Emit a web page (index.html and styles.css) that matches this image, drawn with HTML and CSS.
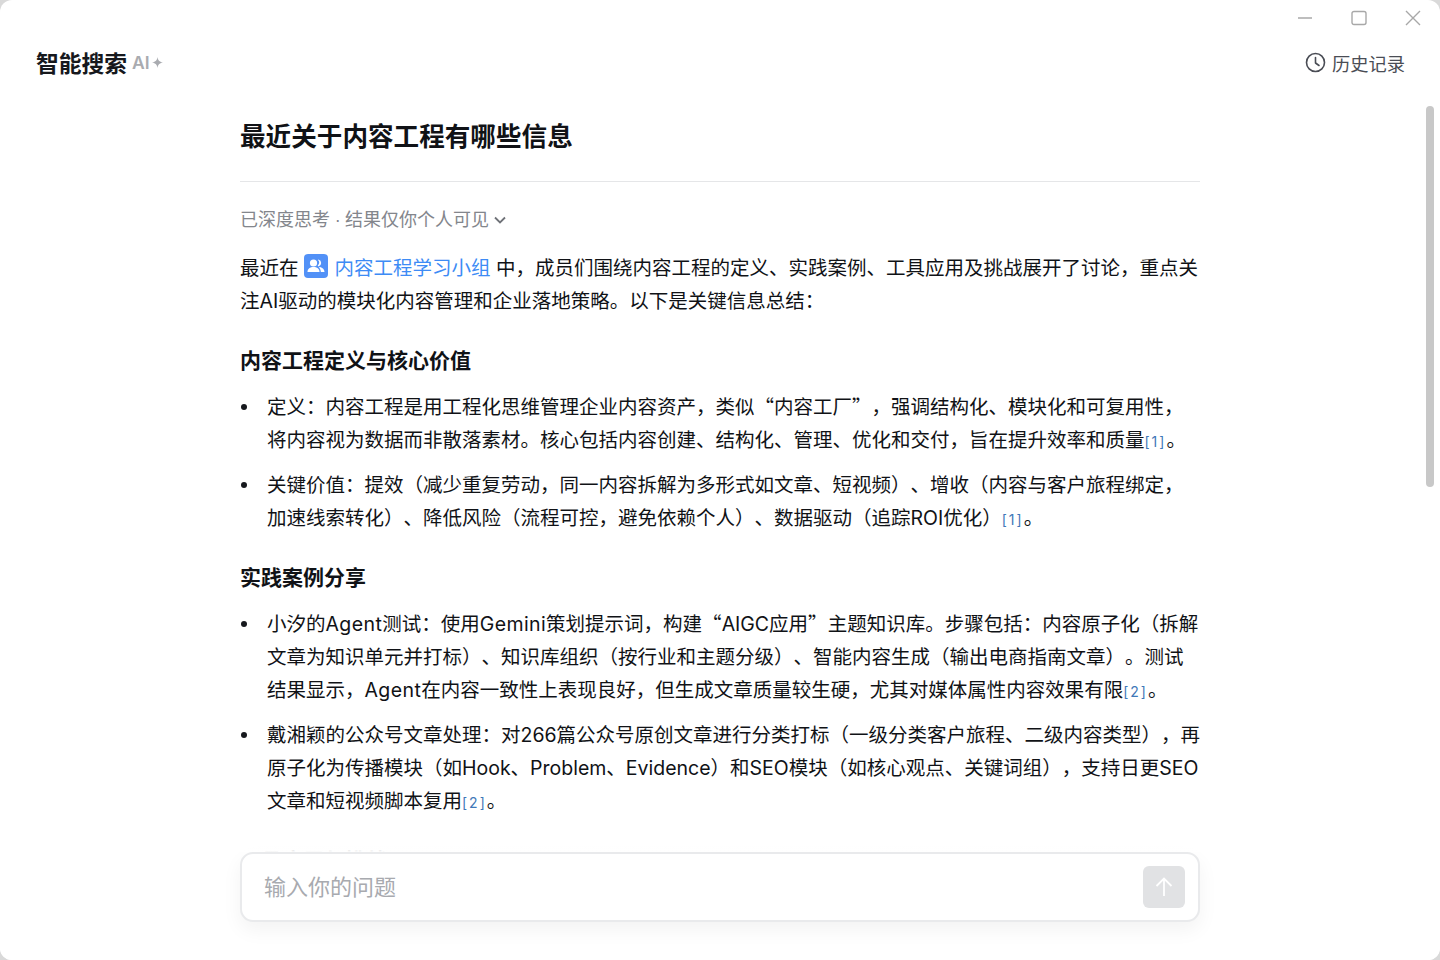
FILE: index.html
```html
<!DOCTYPE html>
<html lang="zh-CN">
<head>
<meta charset="utf-8">
<title>智能搜索</title>
<link rel="stylesheet" href="styles.css">
</head>
<body>
<div class="window">
  <div class="controls">
    <svg class="ctl" width="16" height="16" viewBox="0 0 16 16"><path d="M1 8h14" /></svg>
    <svg class="ctl" width="16" height="16" viewBox="0 0 16 16"><rect x="1" y="1.500" width="14" height="13" rx="2" /></svg>
    <svg class="ctl" width="16" height="16" viewBox="0 0 16 16"><path d="M1 1l14 14M15 1L1 15" /></svg>
  </div>
  <header class="topbar">
    <div class="brand">
      <span class="brand-name">智能搜索</span>
      <span class="brand-ai">AI</span>
      <svg class="spark" width="11" height="11" viewBox="0 0 10 10"><path d="M5 0c.5 3 1.500 4.300 5 5-3.500.7-4.500 2-5 5-.5-3-1.500-4.300-5-5 3.500-.7 4.500-2 5-5z"/></svg>
    </div>
    <div class="history">
      <svg class="clock" width="21" height="21" viewBox="0 0 21 21"><circle cx="10.500" cy="10.500" r="9"/><path d="M10.500 5.500v5.500l3.500 2.500"/></svg>
      <span>历史记录</span>
    </div>
  </header>
  <main class="scroller">
    <article class="article">
      <h1 class="title">最近关于内容工程有哪些信息</h1>
      <div class="meta">
        <span>已深度思考<span class="dot"> · </span>结果仅你个人可见</span>
        <svg class="chev" width="14" height="14" viewBox="0 0 14 14"><path d="M2 4.500l5 5 5-5"/></svg>
      </div>
      <p class="para">最近在<span class="group-icon"><svg width="24" height="24" viewBox="0 0 24 24"><rect width="24" height="24" rx="4" class="gi-bg"/><circle cx="9.500" cy="9" r="3.600" class="gi-fg"/><path class="gi-fg" d="M3.500 18c0-3.300 2.500-5 6-5s6 1.700 6 5z"/><path class="gi-fg" d="M14.500 5.600a3.500 3.500 0 0 1 0 6.800l-.8-.8c1-.9 1.500-2 1.500-3s-.5-1.900-1.300-2.500zM16 13c2.600.7 4.500 2.200 4.500 5h-3.700c0-1.900-.6-3.600-2-4.600z"/></svg></span><a class="link">内容工程学习小组</a> 中&#xFF0C;成员们围绕内容工程的定义、实践案例、工具应用及挑战展开了讨论&#xFF0C;重点关<br>注AI驱动的模块化内容管理和企业落地策略。以下是关键信息总结&#xFF1A;</p>
      <h2 class="heading">内容工程定义与核心价值</h2>
      <ul class="list">
        <li>定义&#xFF1A;内容工程是用工程化思维管理企业内容资产&#xFF0C;类似<span class="cjk">“</span>内容工厂<span class="cjk">”</span>&#xFF0C;强调结构化、模块化和可复用性&#xFF0C;<br>将内容视为数据而非散落素材。核心包括内容创建、结构化、管理、优化和交付&#xFF0C;旨在提升效率和质量<sup class="cite">[1]</sup>。</li>
        <li>关键价值&#xFF1A;提效&#xFF08;减少重复劳动&#xFF0C;同一内容拆解为多形式如文章、短视频&#xFF09;、增收&#xFF08;内容与客户旅程绑定&#xFF0C;<br>加速线索转化&#xFF09;、降低风险&#xFF08;流程可控&#xFF0C;避免依赖个人&#xFF09;、数据驱动&#xFF08;追踪ROI优化&#xFF09;<sup class="cite">[1]</sup>。</li>
      </ul>
      <h2 class="heading">实践案例分享</h2>
      <ul class="list">
        <li>小汐的<span class="lat">Agent</span>测试&#xFF1A;使用<span class="lat">Gemini</span>策划提示词&#xFF0C;构建<span class="cjk">“</span>AIGC应用<span class="cjk">”</span>主题知识库。步骤包括&#xFF1A;内容原子化&#xFF08;拆解<br>文章为知识单元并打标&#xFF09;、知识库组织&#xFF08;按行业和主题分级&#xFF09;、智能内容生成&#xFF08;输出电商指南文章&#xFF09;。测试<br>结果显示&#xFF0C;<span class="lat">Agent</span>在内容一致性上表现良好&#xFF0C;但生成文章质量较生硬&#xFF0C;尤其对媒体属性内容效果有限<sup class="cite">[2]</sup>。</li>
        <li>戴湘颖的公众号文章处理&#xFF1A;对266篇公众号原创文章进行分类打标&#xFF08;一级分类客户旅程、二级内容类型&#xFF09;&#xFF0C;再<br>原子化为传播模块&#xFF08;如Hook、Problem、Evidence&#xFF09;和SEO模块&#xFF08;如核心观点、关键词组&#xFF09;&#xFF0C;支持日更SEO<br>文章和短视频脚本复用<sup class="cite">[2]</sup>。</li>
      </ul>
      <h2 class="heading">工具应用与挑战</h2>
    </article>
    <div class="scrollbar"></div>
  </main>
  <div class="composer-wrap">
    <div class="composer">
      <span class="placeholder">输入你的问题</span>
      <button class="send" type="button"><svg width="18" height="20" viewBox="0 0 18 20"><path d="M9 19V1.500M1.500 9L9 1.500 16.500 9"/></svg></button>
    </div>
  </div>
</div>
</body>
</html>
```
FILE: styles.css
```css
* { box-sizing: border-box; }
html, body { margin: 0; height: 100%; background: #d9d9d9; }
body { font-family: "Inter", "Noto Sans CJK SC", sans-serif; color: #16181d; overflow: hidden; text-spacing-trim: space-all; }
.window { position: relative; width: 1440px; height: 960px; background: #fff; border-radius: 12px; overflow: hidden; }
.controls { position: absolute; top: 10px; right: 19px; z-index: 2; display: flex; gap: 38px; }
.ctl { fill: none; stroke: #a8a8a8; stroke-width: 1.4; }
.topbar { display: flex; justify-content: space-between; align-items: center; height: 125px; padding: 0 35px 0 36px; }
.brand { display: flex; align-items: center; }
.brand-name { font-size: 22.75px; font-weight: 700; color: #16181d; }
.brand-ai { margin-left: 5px; font-size: 17.500px; font-weight: 600; color: #a9abb0; }
.spark { margin-left: 2px; fill: #a9abb0; }
.history { display: flex; align-items: center; gap: 6px; font-size: 18.25px; color: #4a4d55; }
.clock { margin-left: -1px; fill: none; stroke: #4a4d55; stroke-width: 1.6; stroke-linecap: round; stroke-linejoin: round; }
.scroller { position: absolute; top: 0; left: 0; width: 1440px; height: 852px; overflow: hidden; }
.article { width: 960px; margin: 0 auto; padding-top: 118px; font-size: 19.5px; line-height: 33px; color: #101216; }
.title { margin: 0; padding-bottom: 25px; font-size: 25.6px; line-height: 38px; font-weight: 700; border-bottom: 1px solid #e5e6e8; }
.meta { display: flex; align-items: center; gap: 4px; margin-top: 21px; font-size: 18px; line-height: 33px; color: #83868c; }
.dot { font-family: "Liberation Sans", sans-serif; letter-spacing: -0.3px; }
.cjk { font-family: "Noto Sans CJK SC", sans-serif; line-height: 0; }
.lat { letter-spacing: 0.4px; }
.chev { fill: none; stroke: #6f7278; stroke-width: 1.8; }
.para { margin: 15px 0 1px; white-space: nowrap; }
.group-icon { display: inline-block; width: 24px; height: 24px; margin: 0 7px 0 5px; vertical-align: -3px; }
.gi-bg { fill: #5291f7; }
.gi-fg { fill: #fff; }
.link { color: #3d8bf5; }
.heading { margin: 26px 0 14px; font-size: 21px; line-height: 33px; font-weight: 700; }
.list { margin: 0; padding: 0 0 0 27px; white-space: nowrap; list-style: none; }
.list li { position: relative; margin-bottom: 12px; }
.list li::before { content: ""; position: absolute; left: -26px; top: 13px; width: 6px; height: 6px; border-radius: 50%; background: #16181d; }
.cite { font-size: 14px; line-height: 0; vertical-align: baseline; color: #3f78b8; letter-spacing: 2px; }
.scrollbar { position: absolute; top: 106px; right: 6px; width: 8px; height: 381px; border-radius: 4px; background: #c8c8c8; }
.composer-wrap { position: absolute; left: 0; right: 0; top: 852px; bottom: 0; background: #fff; display: flex; justify-content: center; align-items: flex-start; }
.composer-wrap::before { content: ""; position: absolute; left: 0; right: 20px; top: -16px; height: 16px; background: linear-gradient(rgba(255, 255, 255, 0), #fff); }
.composer { display: flex; justify-content: space-between; align-items: center; width: 960px; height: 70px; padding: 0 13px 0 22px; background: #fff; border: 2px solid #e9eaec; border-radius: 13px; box-shadow: 0 8px 20px rgba(0, 0, 0, 0.05); }
.placeholder { padding-bottom: 4px; font-size: 22px; color: #a8aaaf; }
.send { display: flex; align-items: center; justify-content: center; width: 42px; height: 42px; padding: 0; border: 0; border-radius: 6px; background: #e1e2e4; }
.send svg { fill: none; stroke: #fff; stroke-width: 1.8; }
```
